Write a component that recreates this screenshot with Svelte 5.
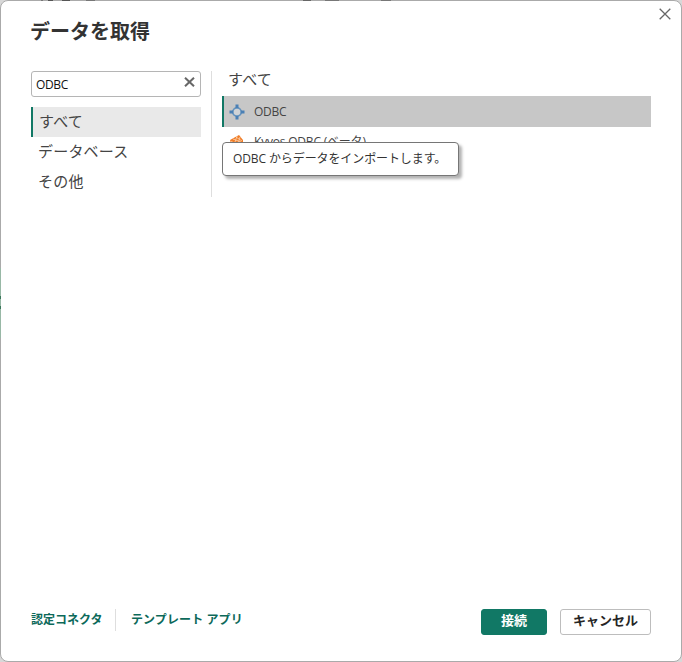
<script lang="ts">
  let query = $state('ODBC')
  let category = $state('すべて')
  const categories = ['すべて', 'データベース', 'その他']
</script>

<div class="dialog">
  <span class="behind"></span>
  <button class="close" aria-label="閉じる">
    <svg width="12" height="12" viewBox="0 0 12 12"><path d="M.7.7l10.6 10.6M11.3.7L.7 11.3" stroke="#666" stroke-width="1.3" /></svg>
  </button>
  <h1>データを取得</h1>

  <div class="body">
    <div class="side">
      <div class="search">
        <input bind:value={query} aria-label="検索" />
        <button class="clear" aria-label="クリア" onclick={() => (query = '')}>
          <svg width="11" height="10" viewBox="0 0 11 10"><path d="M1 .7l9 8.6M10 .7L1 9.3" stroke="#686868" stroke-width="2" /></svg>
        </button>
      </div>
      <nav>
        {#each categories as item}
          <button class="category" class:active={category === item} onclick={() => (category = item)}>{item}</button>
        {/each}
      </nav>
    </div>

    <div class="results">
      <h2>{category}</h2>
      <div class="row selected">
        <svg width="16" height="16" viewBox="0 0 16 16">
          <circle cx="8" cy="8" r="4.2" fill="#d0d3d6" stroke="#6593bd" stroke-width="1.8" />
          <path d="M6.5 .5h3v3.5h-3zM6.5 12h3v3.5h-3zM.5 6.5h3.5v3h-3.5zM12 6.5h3.5v3h-3.5z" fill="#4a80b5" />
        </svg>
        <span>ODBC</span>
      </div>
      <div class="row second">
        <svg width="16" height="16" viewBox="0 0 16 16">
          <path d="M1 7l9-5 4 5v6l-7 3-6-4z" fill="#f07d28" />
          <path d="M4 6l8 3M7 4l6 4M1 8l7 3M8 3l-2 6M11 4l-2 7" stroke="#fbd0ac" stroke-width=".8" />
        </svg>
        <span>Kyvos ODBC (ベータ)</span>
      </div>
      <div class="tooltip">ODBC からデータをインポートします。</div>
    </div>
  </div>

  <footer>
    <a class="certified" href="#certified">認定コネクタ</a>
    <a class="templates" href="#templates">テンプレート アプリ</a>
    <div class="actions">
      <button class="btn primary">接続</button>
      <button class="btn">キャンセル</button>
    </div>
  </footer>
</div>

<style>
  :global(body) { background: #d8d8d8; overflow: hidden; }
  .dialog {
    box-sizing: border-box; position: relative; width: 682px; height: 662px;
    display: flex; flex-direction: column; padding: 0 30px;
    background: #fff; border: 1px solid #aaa; border-radius: 8px;
    font-family: 'Open Sans', 'Noto Sans CJK JP', sans-serif; color: #333;
  }
  button { font-family: inherit; cursor: pointer; }
  svg { display: block; flex-shrink: 0; }
  /* the window underneath shows through at the rim */
  .behind::before, .behind::after { content: ''; position: absolute; }
  .behind::before {
    left: -1px; top: 267px; width: 1px; height: 70px;
    background: linear-gradient(#98b8a6 28px, #39775a 28px 31px, #98b8a6 31px 38px, #39775a 38px 41px, #98b8a6 41px);
  }
  .behind::after {
    left: 40px; top: -1px; width: 405px; height: 1px;
    background: linear-gradient(90deg, #777 2px, transparent 2px 7px, #555 7px 12px, transparent 12px 21px, #555 21px 29px, transparent 29px 45px, #777 45px 54px, transparent 54px 262px, #666 262px 270px, transparent 270px 284px, #777 284px 298px, transparent 298px 340px, #777 340px 350px, transparent 350px);
  }
  .close { position: absolute; top: 7px; right: 10px; padding: 0; border: 0; background: none; }
  h1 { margin: 16px 0 0 -1px; height: 30px; line-height: 30px; font-size: 20px; font-weight: 700; }
  .body { display: flex; margin-top: 24px; height: 126px; }
  .side { width: 170px; padding-right: 10px; border-right: 1px solid #dedede; }
  .search {
    box-sizing: border-box; display: flex; align-items: center; height: 26px;
    padding: 0 5px 0 4px; border: 1px solid #b5b5b5; border-radius: 3px;
  }
  input {
    flex: 1; min-width: 0; padding: 0; border: 0; outline: 0; background: none;
    font: 12px 'Open Sans', sans-serif; letter-spacing: -.35px; color: #111;
  }
  .clear { margin-bottom: 4px; padding: 0; border: 0; background: none; }
  nav { margin-top: 10px; }
  .category {
    box-sizing: border-box; display: block; width: 100%; height: 30px; padding: 0 0 2px 7px;
    border: 0; background: none; text-align: left; font-size: 15px; line-height: 28px; letter-spacing: .2px; color: #444;
  }
  .category.active { padding-left: 6px; border-left: 2px solid #117865; background: #e9e9e9; }
  .results { position: relative; width: 429px; margin-left: 10px; }
  h2 { margin: 0; height: 25px; padding: 0 0 0 6px; font-size: 15px; font-weight: 400; line-height: 17px; letter-spacing: .2px; color: #444; }
  .row { box-sizing: border-box; display: flex; align-items: center; height: 28px; padding-left: 7px; font-size: 12px; color: #444; }
  .row span { margin-left: 9px; letter-spacing: -.3px; white-space: nowrap; }
  .row.selected { height: 31px; padding-left: 5px; border-left: 2px solid #117865; background: #c7c7c7; }
  .row.second span { letter-spacing: -.2px; }
  .tooltip {
    position: absolute; left: 0; top: 71px; box-sizing: border-box; width: 237px; height: 34px;
    padding-left: 10px; border: 1px solid #767676; border-radius: 4px; background: #fff;
    box-shadow: 3px 3px 3px rgba(0, 0, 0, .3);
    font-size: 12px; line-height: 32px; letter-spacing: -.1px; white-space: nowrap;
  }
  footer { display: flex; margin-top: auto; height: 52px; }
  footer a { height: 22px; line-height: 22px; font-size: 12px; font-weight: 700; color: #0c695a; text-decoration: none; white-space: nowrap; }
  .certified { width: 84px; border-right: 1px solid #dedede; }
  .templates { margin-left: 15px; letter-spacing: .1px; }
  .actions { display: flex; gap: 13px; margin-left: auto; }
  .btn {
    box-sizing: border-box; width: 91px; height: 26px; padding: 0 0 3px;
    border: 1px solid #bdbdbd; border-radius: 3px; background: #fff;
    font-size: 13px; font-weight: 700; line-height: 21px; color: #252525;
  }
  .btn.primary { width: 66px; border-color: #117865; background: #117865; color: #fff; }
</style>
